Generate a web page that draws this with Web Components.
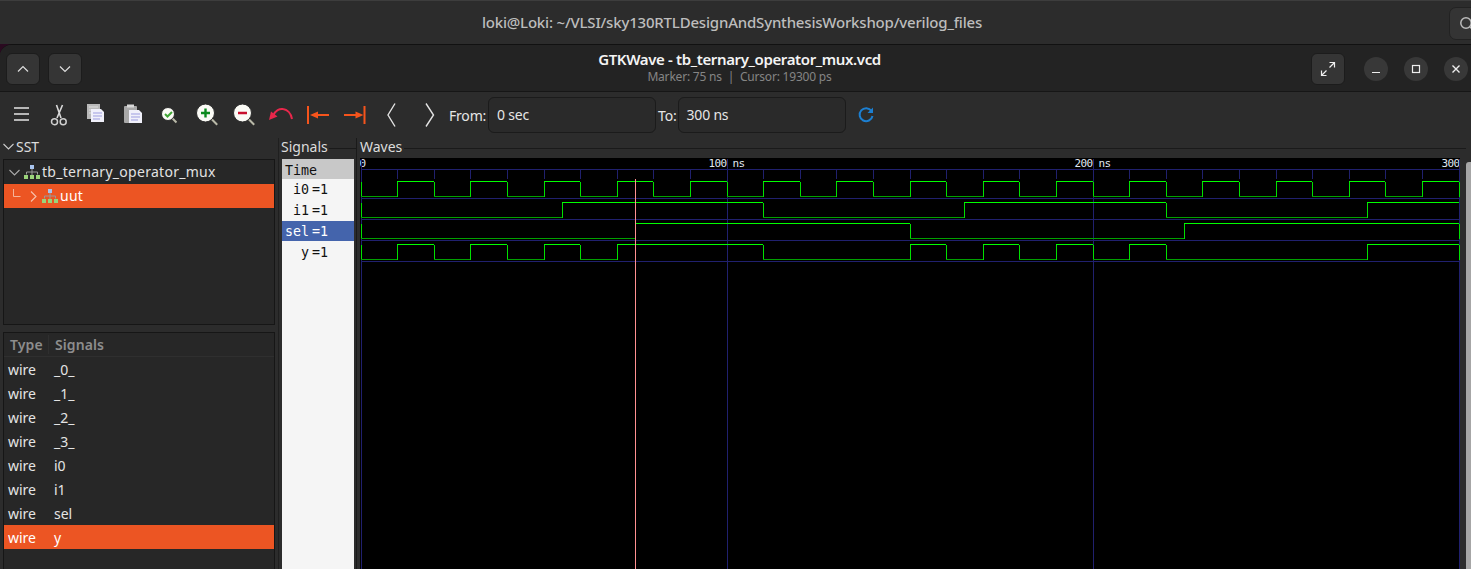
<!DOCTYPE html>
<html>
<head>
<meta charset="utf-8">
<title>GTKWave</title>
<style>
  html, body { margin: 0; height: 100%; overflow: hidden; background: #2c2c2c; }
  body { font-family: "Noto Sans", "Liberation Sans", sans-serif; color: #fff; }
</style>
</head>
<body>
<gw-titlebar>loki@Loki: ~/VLSI/sky130RTLDesignAndSynthesisWorkshop/verilog_files</gw-titlebar>
<gw-window>
  <gw-headerbar slot="header"></gw-headerbar>
  <gw-toolbar slot="toolbar"></gw-toolbar>
  <gw-sst slot="sst">
    <gw-tree-row>tb_ternary_operator_mux</gw-tree-row>
    <gw-tree-row child selected>uut</gw-tree-row>
  </gw-sst>
  <gw-signal-list slot="list">
    <gw-signal-row>_0_</gw-signal-row>
    <gw-signal-row>_1_</gw-signal-row>
    <gw-signal-row>_2_</gw-signal-row>
    <gw-signal-row>_3_</gw-signal-row>
    <gw-signal-row>i0</gw-signal-row>
    <gw-signal-row>i1</gw-signal-row>
    <gw-signal-row>sel</gw-signal-row>
    <gw-signal-row selected>y</gw-signal-row>
  </gw-signal-list>
  <gw-signals slot="signals">
    <gw-trace-name head>Time</gw-trace-name>
    <gw-trace-name value="1">i0</gw-trace-name>
    <gw-trace-name value="1">i1</gw-trace-name>
    <gw-trace-name value="1" selected>sel</gw-trace-name>
    <gw-trace-name value="1">y</gw-trace-name>
  </gw-signals>
  <gw-waves slot="waves"></gw-waves>
</gw-window>

<script>
const SANS = '"Noto Sans", "Liberation Sans", sans-serif';
const MONO = '"DejaVu Sans Mono", "Liberation Mono", monospace';

class GwTitlebar extends HTMLElement {
  constructor() {
    super();
    this.attachShadow({ mode: 'open' });
    this.shadowRoot.innerHTML = `
      <style>
        :host { display: flex; height: 44px; box-sizing: border-box; border-top: 1px solid #3d3d3d;
                align-items: center; justify-content: center; position: relative; background: #2c2c2c; }
        .t { font: 500 15px ${SANS}; color: #bdbdbd; padding-bottom: 1px; margin-right: 7px; letter-spacing: -.19px; }
        .search { position: absolute; right: -14px; top: 6px; width: 36px; height: 33px; box-sizing: border-box;
                  background: #343434; border: 1px solid #222; border-radius: 7px; }
        svg { position: absolute; left: 9px; top: 8px; }
      </style>
      <span class="t"><slot></slot></span>
      <div class="search"><svg width="16" height="16" viewBox="0 0 16 16" fill="none" stroke="#bbb" stroke-width="1.5"><circle cx="7" cy="7" r="5.2"/><path d="M11 11l4 4"/></svg></div>`;
  }
}

class GwWindow extends HTMLElement {
  constructor() {
    super();
    this.attachShadow({ mode: 'open' });
    this.shadowRoot.innerHTML = `
      <style>
        :host { display: block; height: 525px; background: #2a0a20; }
        .win { height: 100%; display: flex; flex-direction: column; background: #2c2c2c;
               border-top: 1px solid #111; box-sizing: border-box; border-top-left-radius: 12px; overflow: hidden; }
        .main { flex: 1; min-height: 0; display: grid; grid-template-columns: 278px 79px 1fr; }
        .left { display: flex; flex-direction: column; }
      </style>
      <div class="win">
        <slot name="header"></slot>
        <slot name="toolbar"></slot>
        <div class="main">
          <div class="left"><slot name="sst"></slot><slot name="list"></slot></div>
          <slot name="signals"></slot>
          <slot name="waves"></slot>
        </div>
      </div>`;
  }
}

class GwHeaderbar extends HTMLElement {
  constructor() {
    super();
    this.attachShadow({ mode: 'open' });
    this.shadowRoot.innerHTML = `
      <style>
        :host { display: flex; height: 47px; box-sizing: border-box; border-bottom: 1px solid #161616;
                background: #232323; align-items: center; padding: 0 0 0 6px; position: relative; }
        button { all: unset; box-sizing: border-box; display: flex; align-items: center; justify-content: center;
                 width: 34px; height: 32px; border-radius: 6px; background: #353535; border: 1px solid #1c1c1c; }
        .nav { display: flex; gap: 8px; margin-top: 2px; }
        .title { flex: 1; text-align: center; margin-left: -82px; margin-right: -168px; }
        .title b { display: block; font: 600 15px/15px ${SANS}; color: #f4f4f4; letter-spacing: -.37px; }
        .title span { display: block; margin-top: 2px; font: 400 12px/15px ${SANS}; color: #858585; letter-spacing: -.2px; }
        .right { display: flex; align-items: center; margin-top: 2px; margin-right: 3px; }
        .round { width: 24px; height: 24px; border-radius: 50%; background: #383838; border: none; margin-left: 16px; }
        .exp { margin-right: 3px; }
      </style>
      <div class="nav">
        <button><svg width="12" height="8" viewBox="0 0 12 8" fill="none" stroke="#ddd" stroke-width="1.2"><path d="M1 6.5l5-5 5 5"/></svg></button>
        <button><svg width="12" height="8" viewBox="0 0 12 8" fill="none" stroke="#ddd" stroke-width="1.2"><path d="M1 1.5l5 5 5-5"/></svg></button>
      </div>
      <div class="title"><b>GTKWave - tb_ternary_operator_mux.vcd</b><span>Marker: 75 ns&nbsp; |&nbsp; Cursor: 19300 ps</span></div>
      <div class="right">
        <button class="exp"><svg width="16" height="16" viewBox="0 0 16 16" fill="none" stroke="#eee" stroke-width="1.2"><path d="M9.5 1.5h5v5M14.5 1.5L9.5 6.5M1.5 9.5v5h5M1.5 14.5l5-5"/></svg></button>
        <button class="round"><svg width="10" height="10" viewBox="0 0 10 10"><path d="M1 8.5h8" stroke="#eee" stroke-width="1.2"/></svg></button>
        <button class="round"><svg width="10" height="10" viewBox="0 0 10 10"><rect x="1.5" y="1.5" width="7" height="7" fill="none" stroke="#eee" stroke-width="1.2"/></svg></button>
        <button class="round"><svg width="10" height="10" viewBox="0 0 10 10"><path d="M1.5 1.5l7 7M8.5 1.5l-7 7" stroke="#eee" stroke-width="1.4"/></svg></button>
      </div>`;
  }
}

const PAGE = (x, y) => `<path d="M${x} ${y}h10l3 3v10h-13z" fill="#f0f0fa"/><path d="M${x + 2} ${y + 4}h9M${x + 2} ${y + 7}h9M${x + 2} ${y + 10}h7" stroke="#9d9de0" stroke-width="1"/>`;
const LENS = (x, y, r, inner) => `<path d="M${x + r * .7} ${y + r * .7}l${r * .6} ${r * .6}" stroke="#b9b9a8" stroke-width="2"/><circle cx="${x}" cy="${y}" r="${r}" fill="#fbfbf6" stroke="#2c2c2c"/>${inner}`;
const ICONS = [
  `<path d="M4 5h15M4 11h15M4 17h15" stroke="#e4e4e4" stroke-width="1.4"/>`,
  `<path d="M9.500 2L14 15M15.500 2L10 15" stroke="#d8d8d8" stroke-width="1.600" fill="none"/><circle cx="7.500" cy="18.700" r="3" fill="none" stroke="#cfcfcf" stroke-width="1.500"/><circle cx="16.200" cy="18.700" r="3" fill="none" stroke="#cfcfcf" stroke-width="1.500"/>`,
  `<rect x="3" y="1" width="13" height="15" fill="#b9b9b9"/><path d="M5 4h9M5 7h9M5 10h6" stroke="#e0e0e0"/>` + PAGE(7, 6),
  `<rect x="3" y="3" width="13" height="17" rx="1" fill="#a8a8a8"/><rect x="6" y="1.500" width="7" height="3" fill="#d8d8d8"/>` + PAGE(8, 7),
  LENS(10, 11, 6.5, `<path d="M7 11l2.500 2.500 4.500-4.500" stroke="#3fa535" stroke-width="2" fill="none"/>`),
  LENS(10.500, 10, 9, `<path d="M10.500 5.500v9M6 10h9" stroke="#0c8a1e" stroke-width="2.400"/>`),
  LENS(10.500, 10, 9, `<path d="M6 10h9" stroke="#c8102e" stroke-width="2.400"/>`),
  `<path d="M4 13C6 7 11 5.500 14 6c4 .500 8 4 9 10" fill="none" stroke="#e8274b" stroke-width="2"/><path d="M0 17L2 8.500l6.500 5z" fill="#e8274b"/>`,
  `<path d="M2 3v18" stroke="#f6541c" stroke-width="2"/><path d="M11 12h12" stroke="#f6541c" stroke-width="2.200"/><path d="M4 12l8-3.500v7z" fill="#f6541c"/>`,
  `<path d="M21.500 3v18" stroke="#f6541c" stroke-width="2"/><path d="M1 12h12" stroke="#f6541c" stroke-width="2.200"/><path d="M20.500 12l-8-3.500v7z" fill="#f6541c"/>`,
  `<path d="M15 .500L8 12l7 11.500" fill="none" stroke="#e2e2e2" stroke-width="1.400"/>`,
  `<path d="M9 .500L16.500 12 9 23.500" fill="none" stroke="#e2e2e2" stroke-width="1.400"/>`
];

class GwToolbar extends HTMLElement {
  constructor() {
    super();
    this.attachShadow({ mode: 'open' });
    const icons = ICONS.map(s => `<span class="i"><svg width="24" height="24" viewBox="0 0 24 24">${s}</svg></span>`).join('');
    this.shadowRoot.innerHTML = `
      <style>
        :host { display: flex; height: 46px; align-items: center; background: #2c2c2c; padding-left: 3px;
                font: 400 14px ${SANS}; color: #e6e6e6; letter-spacing: -.2px; }
        .i { width: 37px; display: flex; justify-content: center; flex: none; }
        svg { display: block; }
        .entry { width: 168px; height: 36px; box-sizing: border-box; border: 1px solid #1b1b1b; border-radius: 6px;
                 background: #2a2a2a; padding-left: 8px; line-height: 34px; }
        .refresh { margin-left: 11px; }
      </style>
      ${icons}
      <label style="margin:0 2px 0 2px">From:</label><div class="entry">0 sec</div>
      <label style="margin:0 1px 0 2px">To:</label><div class="entry">300 ns</div>
      <svg class="refresh" width="18" height="18" viewBox="0 0 18 18"><path d="M14.500 5A6.500 6.500 0 1 0 15.500 10" fill="none" stroke="#1c7fd1" stroke-width="2"/><path d="M16 1.500V7H10.500z" fill="#1c7fd1"/></svg>`;
  }
}

class GwSst extends HTMLElement {
  constructor() {
    super();
    this.attachShadow({ mode: 'open' });
    this.shadowRoot.innerHTML = `
      <style>
        :host { display: flex; flex-direction: column; height: 187px; padding: 0 3px 0 3px; box-sizing: content-box; }
        .head { height: 21px; box-sizing: border-box; padding-bottom: 4px; display: flex; align-items: center; font: 400 14px ${SANS}; color: #ddd; gap: 2px; }
        .frame { height: 166px; box-sizing: border-box; border: 1px solid #161616; background: #272727; }
      </style>
      <div class="head"><svg width="11" height="7" viewBox="0 0 11 7" fill="none" stroke="#ccc" stroke-width="1.100"><path d="M.500 1l5 5 5-5"/></svg><span>SST</span></div>
      <div class="frame"><slot></slot></div>`;
  }
}

class GwTreeRow extends HTMLElement {
  connectedCallback() {
    if (this.shadowRoot) return;
    this.attachShadow({ mode: 'open' });
    const child = this.hasAttribute('child');
    const sq = (x, y, c) => `<rect x="${x}" y="${y}" width="4" height="4" fill="${c}"/>`;
    const tree = `<svg width="16" height="14" viewBox="0 0 16 14"><path d="M8 4v3M2.500 9.500V7h11v2.500M8 7v3" stroke="#9a9a9a" fill="none"/>${sq(6, 0, '#a9c4ee')}${sq(0, 10, '#9bd47a')}${sq(6, 10, '#9bd47a')}${sq(12, 10, '#9bd47a')}</svg>`;
    const arrow = child
      ? `<svg class="l" width="9" height="10" viewBox="0 0 9 10"><path d="M1.500 0v7.500h7" fill="none" stroke="#f5b49a"/></svg><svg class="a" width="7" height="11" viewBox="0 0 7 11"><path d="M1 .500l5 5-5 5" fill="none" stroke="#f7c3ae" stroke-width="1.100"/></svg>`
      : `<svg class="a" width="11" height="7" viewBox="0 0 11 7"><path d="M.500 1l5 5 5-5" fill="none" stroke="#aaa" stroke-width="1.100"/></svg>`;
    this.shadowRoot.innerHTML = `
      <style>
        :host { display: flex; align-items: center; height: 24px; padding-left: ${child ? 8 : 5}px; font: 400 14px ${SANS}; color: #e2e2e2; letter-spacing: .28px; }
        :host([selected]) { background: #ec5523; color: #fff; }
        .a { margin-right: ${child ? 5 : 4}px; } .l { margin-right: 9px; margin-top: -4px; }
        svg { flex: none; }
        .n { margin-left: 2px; padding-bottom: 1px; }
      </style>${arrow}${tree}<span class="n"><slot></slot></span>`;
  }
}

class GwSignalList extends HTMLElement {
  constructor() {
    super();
    this.attachShadow({ mode: 'open' });
    this.shadowRoot.innerHTML = `
      <style>
        :host { display: block; flex: 1; padding: 7px 3px 0 3px; min-height: 0; }
        .frame { height: 100%; box-sizing: border-box; border: 1px solid #161616; border-bottom: 0; background: #272727; }
        .head { display: flex; height: 24px; align-items: center; font: 600 14px ${SANS}; color: #8d8d8d; border-bottom: 1px solid #2f2f2f; box-sizing: border-box; letter-spacing: .1px; }
        .head span:first-child { width: 45px; padding-left: 6px; box-sizing: border-box; border-right: 1px solid #2f2f2f; margin-right: 6px; }
      </style>
      <div class="frame"><div class="head"><span>Type</span><span>Signals</span></div><slot></slot></div>`;
  }
}

class GwSignalRow extends HTMLElement {
  constructor() {
    super();
    this.attachShadow({ mode: 'open' });
    this.shadowRoot.innerHTML = `
      <style>
        :host { display: flex; height: 24px; align-items: center; font: 400 14px ${SANS}; color: #e4e4e4; }
        :host([selected]) { background: #ec5523; color: #fff; }
        .t { width: 50px; padding-left: 4px; box-sizing: border-box; }
      </style><span class="t">wire</span><slot></slot>`;
  }
}

class GwSignals extends HTMLElement {
  constructor() {
    super();
    this.attachShadow({ mode: 'open' });
    this.shadowRoot.innerHTML = `
      <style>
        :host { display: flex; flex-direction: column; font: 400 14px ${SANS}; color: #ddd; padding-left: 3px;
                overflow: hidden; border-left: 1px solid #1f1f1f; border-right: 1px solid #1a1a1a; }
        .lab { height: 21px; line-height: 18px; margin-left: -1px; display: flex; align-items: flex-start; }
        .lab::after { content: ""; flex: 1; height: 1px; margin: 10px 0 0 1px; background: #1a1a1a; }
        .pane { width: 72px; flex: 1; background: #f5f5f5; }
      </style>
      <div class="lab">Signals</div>
      <div class="pane"><slot></slot></div>`;
  }
}

class GwTraceName extends HTMLElement {
  connectedCallback() {
    if (this.shadowRoot) return;
    this.attachShadow({ mode: 'open' });
    const head = this.hasAttribute('head');
    const value = this.getAttribute('value');
    this.shadowRoot.innerHTML = `
      <style>
        :host { display: flex; height: 20px; margin-bottom: 1px; padding-left: 3px; font: 400 13.33px/22px ${MONO}; color: #111; background: #f5f5f5; }
        :host([head]) { background: #c8c8c8; margin-bottom: 0; line-height: 24px; }
        :host([selected]) { background: #4464ac; color: #fff; }
        .name { width: 24px; text-align: ${head ? 'left' : 'right'}; white-space: nowrap; margin-right: 3px; }
      </style><span class="name"><slot></slot></span>${value ? `<span>=${value}</span>` : ''}`;
  }
}

// edge positions in px, measured off the reference (36.6px per half period of i0)
const TICKS = [361, 397, 434, 470, 507, 544, 580, 617, 653, 690, 727, 763, 800, 836, 873, 910, 946, 983, 1019, 1056, 1093, 1129, 1166, 1202, 1239, 1276, 1312, 1349, 1385, 1422, 1459];
const END = 1459;
const TRACES = [
  { hi: 181, lo: 196, edges: TICKS.slice(1, -1), close: true },
  { hi: 202, lo: 217, edges: [562, 763, 964, 1166, 1367], close: false },
  { hi: 223, lo: 238, edges: [635, 910, 1184], close: true },
  { hi: 244, lo: 259, edges: [397, 434, 470, 507, 544, 580, 617, 763, 910, 946, 983, 1019, 1056, 1093, 1129, 1166, 1367], close: true }
];

function line(x1, y1, x2, y2, c) {
  return `<line x1="${x1}" y1="${y1}" x2="${x2}" y2="${y2}" stroke="${c}"/>`;
}

function traceSvg(t) {
  let s = line(361, t.hi, 361, t.lo, '#00e000');
  let x = 361, high = false;
  for (const e of [...t.edges, END]) {
    s += line(x, high ? t.hi : t.lo, e, high ? t.hi : t.lo, high ? '#00ff00' : '#00a000');
    if (e !== END || t.close) s += line(e, t.hi, e, t.lo, '#00e000');
    x = e; high = !high;
  }
  return s;
}

class GwWaves extends HTMLElement {
  constructor() {
    super();
    this.attachShadow({ mode: 'open' });
    let g = '';
    for (const y of [169, 198, 219, 240, 261]) g += line(361, y, END, y, '#20206e');
    for (const x of TICKS) g += line(x, 169, x, 178, '#20206e');
    for (const x of [727, 1093]) g += line(x, 158, x, 569, '#20206e');
    g += line(361, 158, 361, 569, '#20206e') + line(END, 158, END, 569, '#20206e');
    for (const t of TRACES) g += traceSvg(t);
    g += line(635, 178, 635, 569, '#ff9090');
    const label = (x, s, a) => `<text x="${x}" y="167" text-anchor="${a || 'start'}" fill="#e0e8f0">${s}</text>`;
    this.shadowRoot.innerHTML = `
      <style>
        :host { display: flex; flex-direction: column; font: 400 14px ${SANS}; color: #ddd; overflow: hidden; }
        .lab { height: 21px; line-height: 18px; padding-left: 3px; display: flex; align-items: flex-start; }
        .lab::after { content: ""; flex: 1; height: 1px; margin: 10px 5px 0 2px; background: #1a1a1a; }
        .row { flex: 1; display: flex; }
        .cv { flex: 1; background: #000; margin-left: 3px; }
        .bar { width: 6px; margin-left: 6px; background: #2c2c2c; }
        .thumb { height: 100%; margin-top: 4px; background: #a6a6a6; border-radius: 3px 0 0 0; }
        svg { display: block; shape-rendering: crispEdges; }
        text { font: 11px ${MONO}; letter-spacing: -.6px; shape-rendering: auto; }
      </style>
      <div class="lab">Waves</div>
      <div class="row">
        <div class="cv"><svg width="1100" height="411" viewBox="360.5 158 1100 411">
          ${label(360, '0')}${label(709, '100 ns')}${label(1075, '200 ns')}${label(1460, '300', 'end')}
          <g transform="translate(.5 .5)">${g}</g>
        </svg></div>
        <div class="bar"><div class="thumb"></div></div>
      </div>`;
  }
}

customElements.define('gw-titlebar', GwTitlebar);
customElements.define('gw-window', GwWindow);
customElements.define('gw-headerbar', GwHeaderbar);
customElements.define('gw-toolbar', GwToolbar);
customElements.define('gw-sst', GwSst);
customElements.define('gw-tree-row', GwTreeRow);
customElements.define('gw-signal-list', GwSignalList);
customElements.define('gw-signal-row', GwSignalRow);
customElements.define('gw-signals', GwSignals);
customElements.define('gw-trace-name', GwTraceName);
customElements.define('gw-waves', GwWaves);
</script>
</body>
</html>
